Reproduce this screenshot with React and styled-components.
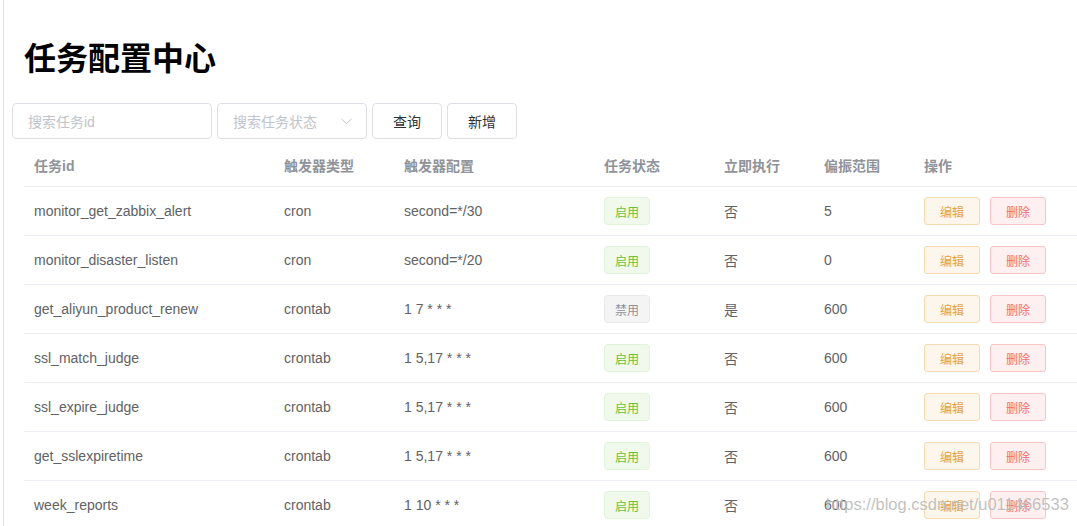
import React from "react";
import styled, { createGlobalStyle } from "styled-components";

const Global = createGlobalStyle`
  html, body { margin: 0; padding: 0; background: #fff; }
  body {
    font-family: "Helvetica Neue", Helvetica, "Liberation Sans", "Noto Sans CJK SC", sans-serif;
    -webkit-font-smoothing: antialiased;
  }
  * { box-sizing: border-box; }
`;

const Page = styled.div`
  position: relative;
  width: 1077px;
  height: 526px;
  overflow: hidden;
  background: #fff;
`;

const Frame = styled.div`
  margin-left: 3px;
  border-left: 1px solid #e2e2e2;
  height: 100%;
  padding-top: 37px;
`;

const Title = styled.h1`
  margin: 0 0 22px 20px;
  font-size: 32px;
  line-height: 44px;
  font-weight: 700;
  color: #000;
  letter-spacing: 0;
`;

const SearchBar = styled.div`
  display: flex;
  gap: 5px;
  margin-left: 8px;
  height: 36px;
`;

const Field = styled.div`
  width: ${(p) => p.$w}px;
  height: 36px;
  border: 1px solid #dcdfe6;
  border-radius: 4px;
  display: flex;
  align-items: center;
  justify-content: space-between;
  padding: 0 14px 0 15px;
  font-size: 14px;
  color: #c0c4cc;
  background: #fff;
`;

const Button = styled.button`
  width: 70px;
  height: 36px;
  border: 1px solid #dcdfe6;
  border-radius: 4px;
  background: #fff;
  font-family: inherit;
  font-size: 14px;
  color: #303133;
  padding: 0;
`;

const Table = styled.div`
  margin: 5px 0 0 20px;
  width: 1070px;
`;

const Row = styled.div`
  display: grid;
  grid-template-columns: 250px 120px 200px 120px 100px 100px 1fr;
  height: ${(p) => (p.$head ? 43 : 49)}px;
  border-bottom: 1px solid #ebeef5;
  align-items: center;
`;

const Cell = styled.div`
  padding: 0 10px;
  font-size: 14px;
  color: ${(p) => (p.$head ? "#909399" : "#606266")};
  font-weight: ${(p) => (p.$head ? 700 : 400)};
  white-space: nowrap;
  display: flex;
  align-items: center;
  gap: 10px;
`;

const tagColors = {
  on: { bg: "#f0f9eb", bd: "#e1f3d8", fg: "#67c23a" },
  off: { bg: "#f4f4f5", bd: "#e9e9eb", fg: "#909399" },
};

const Tag = styled.span`
  display: inline-flex;
  align-items: center;
  height: 28px;
  padding: 0 10px;
  font-size: 12px;
  border-radius: 4px;
  border: 1px solid ${(p) => tagColors[p.$kind].bd};
  background: ${(p) => tagColors[p.$kind].bg};
  color: ${(p) => tagColors[p.$kind].fg};
`;

const btnColors = {
  warning: { bg: "#fdf6ec", bd: "#f5dab1", fg: "#e6a23c" },
  danger: { bg: "#fef0f0", bd: "#fbc4c4", fg: "#f56c6c" },
};

const MiniButton = styled.button`
  width: 56px;
  height: 28px;
  padding: 0;
  font-family: inherit;
  font-size: 12px;
  border-radius: 3px;
  border: 1px solid ${(p) => btnColors[p.$type].bd};
  background: ${(p) => btnColors[p.$type].bg};
  color: ${(p) => btnColors[p.$type].fg};
`;

const Watermark = styled.div`
  position: absolute;
  left: 826px;
  top: 495px;
  font-family: "Liberation Sans", Arial, sans-serif;
  font-size: 16.5px;
  color: rgba(130, 130, 130, 0.5);
  text-shadow: 0 0 1px rgba(255, 255, 255, 0.8);
  pointer-events: none;
  white-space: nowrap;
`;

const Chevron = () => (
  <svg width="11" height="7" viewBox="0 0 11 7" fill="none">
    <path d="M0.5 0.8 L5.5 5.8 L10.5 0.8" stroke="#c0c4cc" strokeWidth="1" />
  </svg>
);

const rows = [
  ["monitor_get_zabbix_alert", "cron", "second=*/30", true, "否", "5"],
  ["monitor_disaster_listen", "cron", "second=*/20", true, "否", "0"],
  ["get_aliyun_product_renew", "crontab", "1 7 * * *", false, "是", "600"],
  ["ssl_match_judge", "crontab", "1 5,17 * * *", true, "否", "600"],
  ["ssl_expire_judge", "crontab", "1 5,17 * * *", true, "否", "600"],
  ["get_sslexpiretime", "crontab", "1 5,17 * * *", true, "否", "600"],
  ["week_reports", "crontab", "1 10 * * *", true, "否", "600"],
];

const headers = ["任务id", "触发器类型", "触发器配置", "任务状态", "立即执行", "偏振范围", "操作"];

export default function App() {
  return (
    <Page>
      <Global />
      <Frame>
        <Title>任务配置中心</Title>
        <SearchBar>
          <Field $w={200}>搜索任务id</Field>
          <Field $w={150}>
            搜索任务状态
            <Chevron />
          </Field>
          <Button>查询</Button>
          <Button>新增</Button>
        </SearchBar>
        <Table>
          <Row $head>
            {headers.map((h) => (
              <Cell $head key={h}>{h}</Cell>
            ))}
          </Row>
          {rows.map((r) => (
            <Row key={r[0]}>
              <Cell>{r[0]}</Cell>
              <Cell>{r[1]}</Cell>
              <Cell>{r[2]}</Cell>
              <Cell>
                <Tag $kind={r[3] ? "on" : "off"}>{r[3] ? "启用" : "禁用"}</Tag>
              </Cell>
              <Cell>{r[4]}</Cell>
              <Cell>{r[5]}</Cell>
              <Cell>
                <MiniButton $type="warning">编辑</MiniButton>
                <MiniButton $type="danger">删除</MiniButton>
              </Cell>
            </Row>
          ))}
        </Table>
      </Frame>
      <Watermark>https://blog.csdn.net/u011466533</Watermark>
    </Page>
  );
}
